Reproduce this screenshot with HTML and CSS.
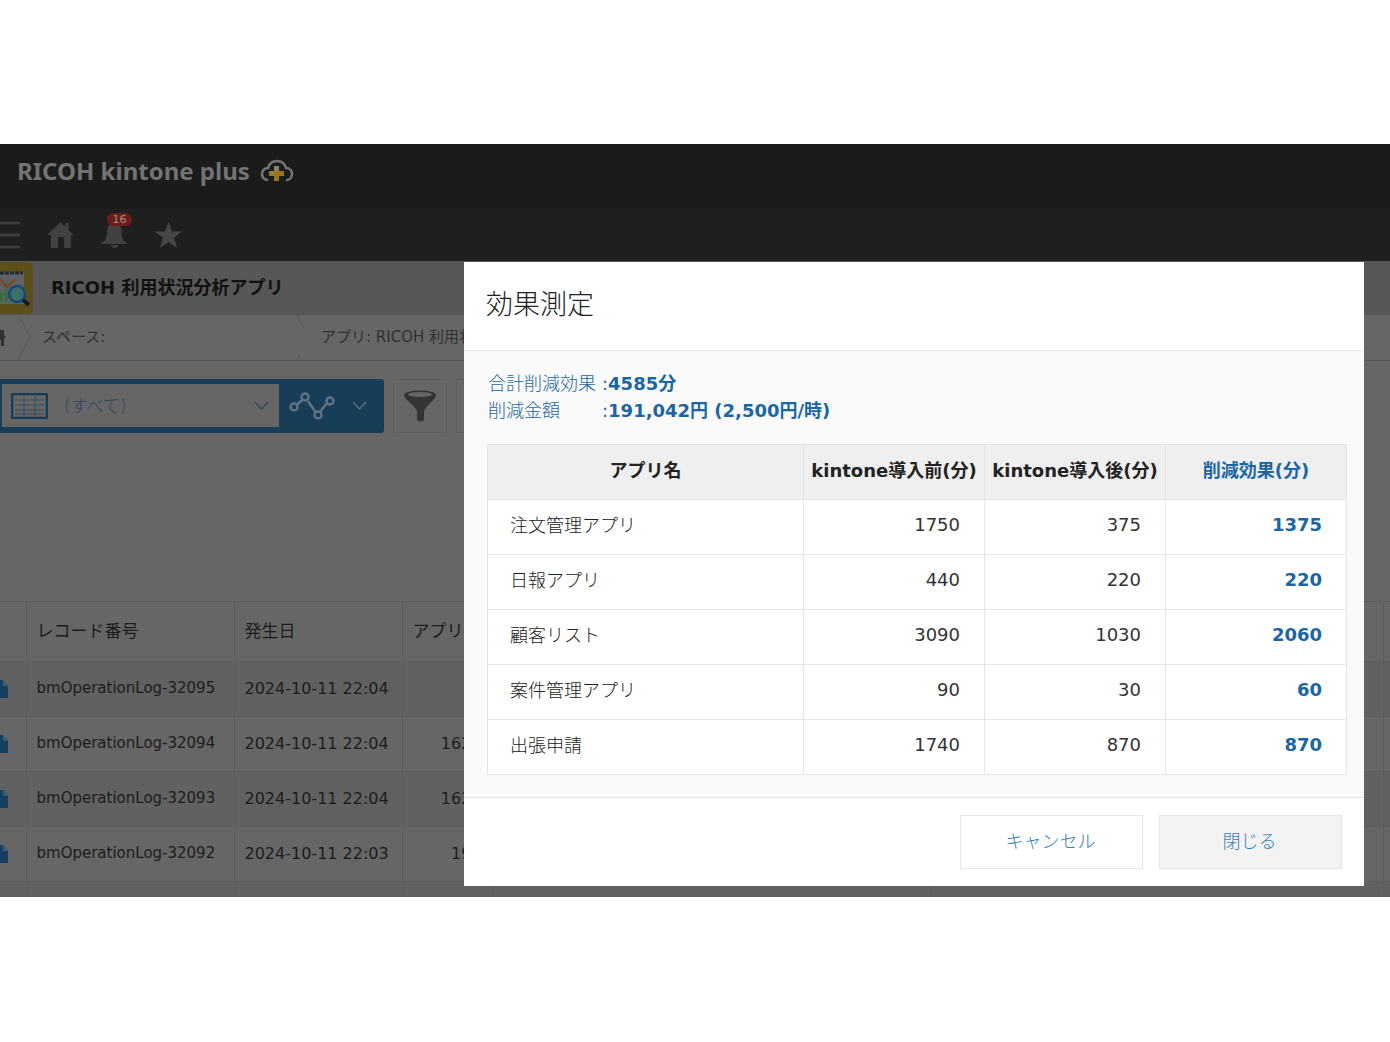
FILE: index.html
```
<!DOCTYPE html>
<html lang="ja">
<head>
<meta charset="utf-8">
<meta name="viewport" content="width=device-width, initial-scale=1">
<title>RICOH 利用状況分析アプリ</title>
<link rel="stylesheet" href="styles.css">
</head>
<body>
<div class="screen">
  <header class="brand">
    <span class="brand-name">RICOH kintone plus</span>
    <svg class="brand-icon" width="34" height="24" viewBox="0 0 34 24" aria-hidden="true">
      <path d="M8 21C4 21 2 18 2 15s2-6 6-6c1-4 4-7 9-7s8 3 9 7c4 0 6 3 6 6s-2 6-6 6" fill="none" stroke="#737373" stroke-width="2.6"/>
      <path d="M14 7h5v5h5v5h-5v5h-5v-5H9v-5h5z" fill="#9b7416"/>
      <path d="M14 7h5v5h-5zM9 12h5v5z" fill="#8d8359"/>
    </svg>
  </header>
  <nav class="global-nav">
    <button class="icon-button" aria-label="メニュー"><svg width="20" height="28" viewBox="0 0 20 28"><path d="M0 2h20M0 14h20M0 26h20" stroke="#3d3d3d" stroke-width="3"/></svg></button>
    <a class="icon-button" href="#" aria-label="ホーム"><svg width="27" height="28" viewBox="0 0 27 28"><path d="M13.500 1l5 5V2h3v7L27 14h-3v13h-7V16h-6v11H4V14H0z" fill="#414141"/></svg></a>
    <button class="icon-button" aria-label="通知"><svg width="27" height="28" viewBox="0 0 27 28"><path d="M13.500 2c5 0 7 4 7 8 0 8 2 10 6 12v1H0v-1c4-2 6-4 6-12 0-4 3-8 7.500-8zM10 24h7c0 4-7 4-7 0z" fill="#414141"/></svg><span class="badge">16</span></button>
    <button class="icon-button" aria-label="ブックマーク"><svg width="27" height="28" viewBox="0 0 27 28"><path d="M13.500 1l3.600 9.500H27l-7.800 6.200L22 27l-8.500-6L5 27l2.800-10.300L0 10.500h9.900z" fill="#464646"/></svg></button>
  </nav>
  <div class="app-title">
    <svg width="33" height="52" viewBox="0 0 33 52" aria-hidden="true">
      <path d="M0 0h27q6 0 6 6v40q0 6-6 6H0z" fill="#5b5019"/>
      <path d="M0 10h24v32H0z" fill="#5d6365"/>
      <path d="M0 11h23" stroke="#252b2d" stroke-width="3" stroke-dasharray="4 1"/>
      <path d="M0 17l7 8 9-8" fill="none" stroke="#81441a" stroke-width="2"/>
      <path d="M1 40V30M6 40V27" stroke="#306d39" stroke-width="3"/>
      <circle cx="17" cy="32" r="8" fill="#3f6774" stroke="#174b76" stroke-width="2.500"/>
      <path d="M14 36v-6M18 37V27" stroke="#397657" stroke-width="3"/>
      <path d="M23 38l6 5" stroke="#151d29" stroke-width="4"/>
    </svg>
    <h1>RICOH 利用状況分析アプリ</h1>
  </div>
  <nav class="crumbs">
    <svg class="crumb-home" width="6" height="18" viewBox="0 0 6 18"><path d="M0 0l2 2V1h2v5l2 3H4v8H1v-6H0z" fill="#313131"/></svg>
    <svg class="crumb-sep" width="14" height="45" viewBox="0 0 14 45"><path d="M1 0l12 22L1 45" fill="none" stroke="#565656"/></svg>
    <a class="space" href="#">スペース:</a>
    <svg class="crumb-sep" width="14" height="45" viewBox="0 0 14 45"><path d="M1 0l7 13M1 45l3-6" fill="none" stroke="#595959"/></svg>
    <a href="#">アプリ: RICOH 利用状況分析アプリ</a>
  </nav>
  <div class="toolbar">
    <div class="view-box">
      <label class="view-select">
        <svg width="37" height="26" viewBox="0 0 37 26" aria-hidden="true"><rect x="1" y="1" width="35" height="24" rx="1" fill="none" stroke="#173b56" stroke-width="2.500"/><path d="M4 7h29M4 12h29M4 17h29M4 21h29M13 3v20M24 3v20" stroke="#354d61"/></svg>
        <select aria-label="一覧"><option>(すべて)</option></select>
        <svg width="15" height="10" viewBox="0 0 15 10" aria-hidden="true"><path d="M1 1l6.500 7L14 1" fill="none" stroke="#304b60" stroke-width="1.500"/></svg>
      </label>
      <button class="graph-button" aria-label="グラフ">
        <svg width="46" height="28" viewBox="0 0 46 28"><g fill="none" stroke="#617282" stroke-width="2.500"><path d="M8 13l5-5M19 9l8 12M31 20l7-9"/><circle cx="5" cy="15" r="3.500"/><circle cx="16" cy="5" r="3.500"/><circle cx="29" cy="23" r="3.500"/><circle cx="41" cy="9" r="3.500"/></g></svg>
        <svg width="15" height="10" viewBox="0 0 15 10"><path d="M1 1l6.500 7L14 1" fill="none" stroke="#557187" stroke-width="1.500"/></svg>
      </button>
    </div>
    <button class="tool" aria-label="絞り込む"><svg width="32" height="32" viewBox="0 0 32 32"><path d="M0 5c0-6 32-6 32 0 0 4-9 10-12 16v9q-4 3-7 0v-9C10 15 0 9 0 5z" fill="#343434"/><ellipse cx="16" cy="4.500" rx="12" ry="2.500" fill="#666"/></svg></button>
    <button class="tool" aria-label="集計"></button>
  </div>
  <table class="records">
    <colgroup><col class="c-open"><col class="c-id"><col class="c-date"><col class="c-app"><col class="c-user"><col><col class="c-end"></colgroup>
    <thead><tr><th></th><th>レコード番号</th><th>発生日</th><th>アプリID</th><th></th><th></th><th></th></tr></thead>
    <tbody>
      <tr><td><a href="#" aria-label="詳細"><svg width="8" height="18" viewBox="0 0 8 18"><path d="M0 0h3l5 6v12H0z" fill="#173f60"/><path d="M3 0v6h5z" fill="#365e79"/></svg></a></td><td class="id">bmOperationLog-32095</td><td>2024-10-11 22:04</td><td></td><td></td><td></td><td></td></tr>
      <tr><td><a href="#" aria-label="詳細"><svg width="8" height="18" viewBox="0 0 8 18"><path d="M0 0h3l5 6v12H0z" fill="#173f60"/><path d="M3 0v6h5z" fill="#365e79"/></svg></a></td><td class="id">bmOperationLog-32094</td><td>2024-10-11 22:04</td><td class="num">1622</td><td></td><td></td><td></td></tr>
      <tr><td><a href="#" aria-label="詳細"><svg width="8" height="18" viewBox="0 0 8 18"><path d="M0 0h3l5 6v12H0z" fill="#173f60"/><path d="M3 0v6h5z" fill="#365e79"/></svg></a></td><td class="id">bmOperationLog-32093</td><td>2024-10-11 22:04</td><td class="num">1622</td><td></td><td></td><td></td></tr>
      <tr><td><a href="#" aria-label="詳細"><svg width="8" height="18" viewBox="0 0 8 18"><path d="M0 0h3l5 6v12H0z" fill="#173f60"/><path d="M3 0v6h5z" fill="#365e79"/></svg></a></td><td class="id">bmOperationLog-32092</td><td>2024-10-11 22:03</td><td class="num">199</td><td></td><td></td><td></td></tr>
      <tr class="cut"><td></td><td></td><td></td><td></td><td></td><td></td><td></td></tr>
    </tbody>
  </table>

  <section class="dialog" role="dialog" aria-labelledby="dialog-title">
    <h2 id="dialog-title">効果測定</h2>
    <div class="dialog-body">
      <dl class="summary">
        <dt>合計削減効果</dt><dd>:<strong>4585分</strong></dd>
        <dt>削減金額</dt><dd>:<strong>191,042円 (2,500円/時)</strong></dd>
      </dl>
      <table class="effects">
        <colgroup><col><col class="c-num"><col class="c-num"><col class="c-num"></colgroup>
        <thead><tr><th>アプリ名</th><th>kintone導入前(分)</th><th>kintone導入後(分)</th><th class="gain">削減効果(分)</th></tr></thead>
        <tbody>
          <tr><td>注文管理アプリ</td><td>1750</td><td>375</td><td class="gain">1375</td></tr>
          <tr><td>日報アプリ</td><td>440</td><td>220</td><td class="gain">220</td></tr>
          <tr><td>顧客リスト</td><td>3090</td><td>1030</td><td class="gain">2060</td></tr>
          <tr><td>案件管理アプリ</td><td>90</td><td>30</td><td class="gain">60</td></tr>
          <tr><td>出張申請</td><td>1740</td><td>870</td><td class="gain">870</td></tr>
        </tbody>
      </table>
    </div>
    <footer class="dialog-actions">
      <button class="action">キャンセル</button>
      <button class="action primary">閉じる</button>
    </footer>
  </section>
</div>
</body>
</html>
```

FILE: styles.css
```
* { box-sizing: border-box; }
body {
  margin: 0;
  padding: 144px 0;
  background: #fff;
  color: #333;
  font-family: "DejaVu Sans", "Noto Sans CJK JP", sans-serif;
}
button, select { font: inherit; color: inherit; border: 0; padding: 0; background: none; border-radius: 0; }
a { color: inherit; text-decoration: none; }
svg { display: block; flex: none; }
h1, h2, dl, dd { margin: 0; }

.screen { position: relative; overflow: hidden; background: #666; color: #1c1c1c; }

.brand { display: flex; align-items: center; gap: 10px; height: 64px; padding: 0 17px 10px; background: #1b1b1b; }
.brand-name { font: bold 24px/32px "Noto Sans", sans-serif; color: #737373; }

.global-nav { display: flex; align-items: center; gap: 27px; height: 53px; background: #1f1f1f; }
.icon-button { position: relative; }
.badge {
  position: absolute; top: -8px; left: 6px;
  width: 25px; height: 13px; border-radius: 6px;
  background: #6b1e17; color: #a08c8a;
  font-size: 11px; line-height: 13px; text-align: center;
}

.app-title { display: flex; align-items: center; gap: 18px; height: 54px; background: #575757; }
.app-title h1 { font-size: 18px; line-height: 24px; color: #111; white-space: nowrap; }

.crumbs { display: flex; align-items: center; height: 46px; border-bottom: 1px solid #575757; font-size: 15px; color: #303030; white-space: nowrap; }
.crumbs a { padding-bottom: 4px; }
.crumb-home { margin-right: 11px; }
.crumb-sep { margin-right: 11px; }
.crumbs .space { flex: 0 0 254px; }

.toolbar { display: flex; gap: 9px; padding-top: 18px; height: 240px; }
.view-box { display: flex; width: 384px; height: 54px; padding: 5px 0 6px 2px; background: #173d57; border-radius: 0 3px 3px 0; }
.view-select { display: flex; align-items: center; gap: 16px; width: 277px; padding: 0 10px 0 9px; background: #666; }
.view-select select { flex: 1; min-width: 0; appearance: none; color: #29435a; font-size: 17px; font-weight: 300; }
.graph-button { display: flex; flex: 1; align-items: center; gap: 17px; padding-left: 10px; }
.tool { display: grid; place-items: center; width: 54px; height: 54px; border: 1px solid #5e5e5e; }

.records { width: 100%; table-layout: fixed; border-collapse: collapse; font-size: 16px; white-space: nowrap; }
.c-open { width: 26px; }
.c-id { width: 208px; }
.c-date { width: 168px; }
.c-app { width: 90px; }
.c-user { width: 439px; }
.c-end { width: 7px; }
.records th, .records td { padding: 0 10px 2px; border-left: 1px solid #5c5c5c; border-top: 1px solid #5c5c5c; text-align: left; overflow: hidden; }
.records th:first-child, .records td:first-child { padding: 0; border-left: 0; }
.records th:last-child, .records td:last-child { padding: 0; }
.records th { height: 60px; padding-bottom: 5px; font-size: 17px; font-weight: 400; }
.records td { height: 55px; }
.records .id { font-size: 15px; }
.records .num { text-align: right; }
.records tbody tr:nth-child(odd) { background: #616161; }
.records .cut td { height: 15px; padding: 0; }

.dialog { position: absolute; top: 118px; right: 26px; width: min(900px, 96%); background: #fff; color: #222; font-size: 18px; }
.dialog h2 { padding: 23px 22px 25px; font-size: 27px; line-height: 40px; font-weight: 300; }
.dialog-body { padding: 19px 17px 22px 23px; background: #fafafa; border: solid #e3e5e6; border-width: 1px 0; }
.summary { display: grid; grid-template-columns: 114px 1fr; padding-left: 1px; line-height: 27px; color: #1a66a3; }
.summary dt { white-space: nowrap; font-weight: 300; }
.summary strong { font-weight: bold; }
.effects { width: 100%; margin-top: 20px; table-layout: fixed; border-collapse: collapse; background: #fff; }
.effects th, .effects td { height: 55px; padding: 0 24px 6px; border: 1px solid #e3e5e6; text-align: right; }
.effects th { padding: 0 0 6px; background: #efefef; text-align: center; font-weight: bold; white-space: nowrap; }
.effects td { color: #333; }
.effects td:first-child { padding-left: 22px; color: #222; text-align: left; font-weight: 300; }
.effects .gain { color: #1a66a3; font-weight: bold; }
.c-num { width: 181px; }
.dialog-actions { display: flex; justify-content: flex-end; gap: 16px; padding: 17px 22px; }
.action { width: 183px; height: 54px; padding: 0 2px 4px 0; border: 1px solid #e3e5e6; background: #fff; color: #3480b8; font-weight: 300; }
.action.primary { background: #f3f3f3; }
```
